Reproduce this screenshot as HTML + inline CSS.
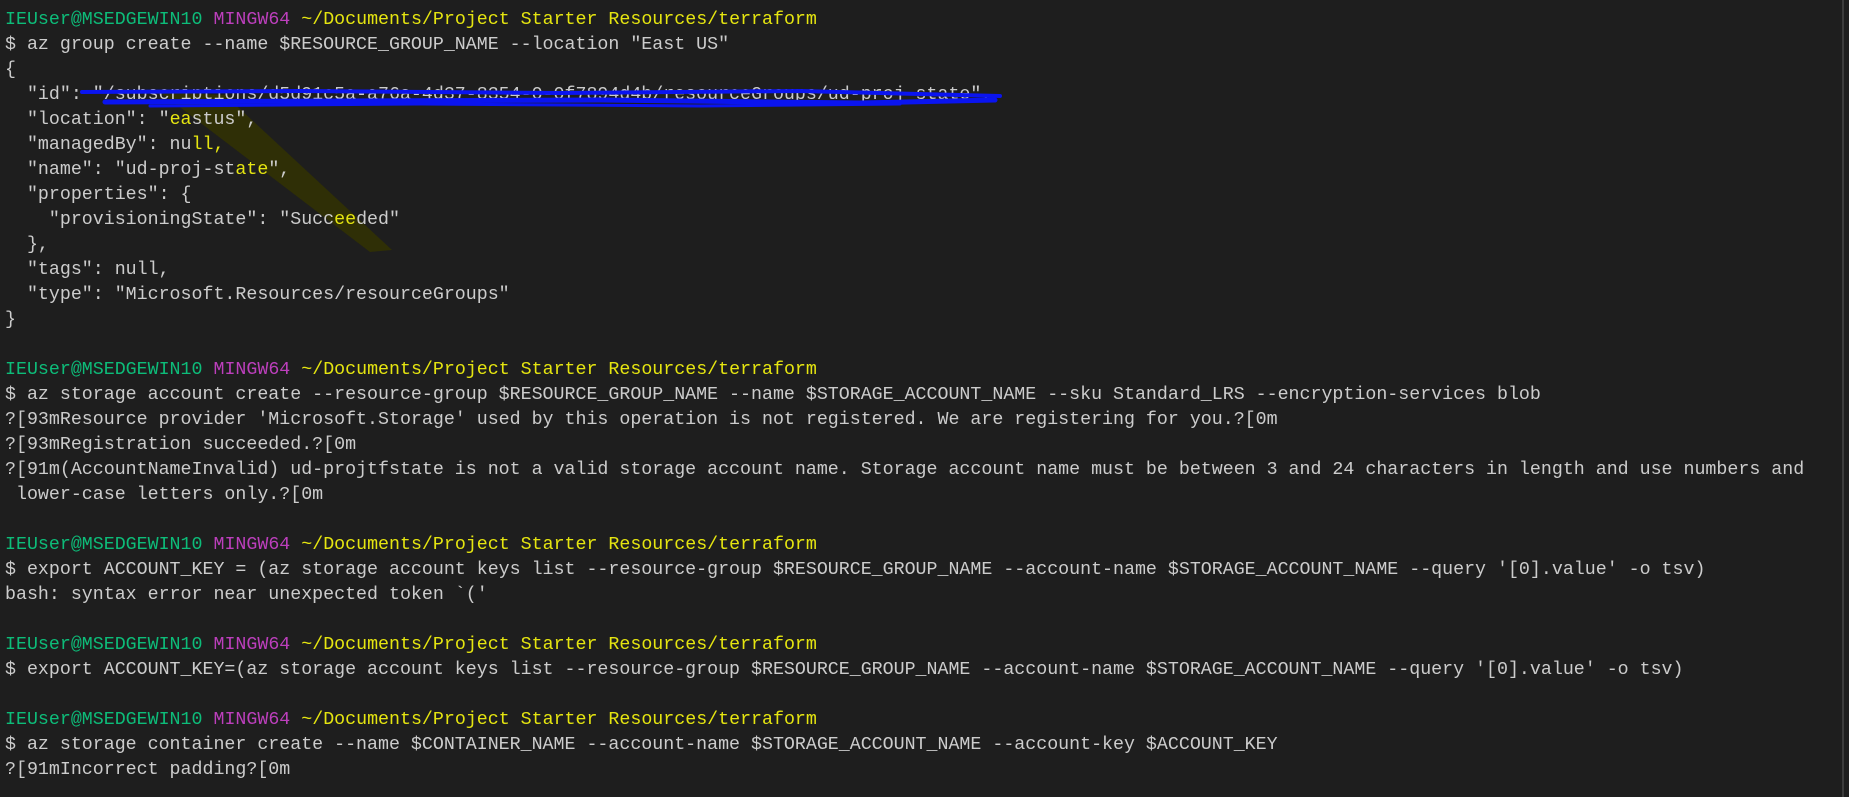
<!DOCTYPE html>
<html><head><meta charset="utf-8"><style>
html,body{margin:0;padding:0;}
body{width:1849px;height:797px;background:#1e1e1e;overflow:hidden;position:relative;}
pre{position:absolute;left:5px;top:8px;margin:0;font-family:"Liberation Mono","DejaVu Sans Mono",monospace;font-size:18.3px;line-height:25px;color:#cccccc;white-space:pre;z-index:2;}
.g{color:#0dbc79}.m{color:#bc3fbc}.y{color:#e5e510}
svg{position:absolute;left:0;top:0;z-index:1}
svg.top{z-index:3}
.bar{position:absolute;left:1842px;top:0;width:2px;height:797px;background:#3c3c3c}
</style></head><body>
<svg width="1849" height="797"><polygon points="160,92 225,95 392,250 370,252" fill="#2f2f06"/></svg>
<pre><span class="g">IEUser@MSEDGEWIN10</span> <span class="m">MINGW64</span> <span class="y">~/Documents/Project Starter Resources/terraform</span>
$ az group create --name $RESOURCE_GROUP_NAME --location "East US"
{
  "id": "/subscriptions/d5d91c5a-a76a-4d37-8354-0-0f7894d4b/resourceGroups/ud-proj-state",
  "location": "<span class="y">ea</span>stus",
  "managedBy": nu<span class="y">ll,</span>
  "name": "ud-proj-st<span class="y">ate</span>",
  "properties": {
    "provisioningState": "Succ<span class="y">ee</span>ded"
  },
  "tags": null,
  "type": "Microsoft.Resources/resourceGroups"
}

<span class="g">IEUser@MSEDGEWIN10</span> <span class="m">MINGW64</span> <span class="y">~/Documents/Project Starter Resources/terraform</span>
$ az storage account create --resource-group $RESOURCE_GROUP_NAME --name $STORAGE_ACCOUNT_NAME --sku Standard_LRS --encryption-services blob
?[93mResource provider 'Microsoft.Storage' used by this operation is not registered. We are registering for you.?[0m
?[93mRegistration succeeded.?[0m
?[91m(AccountNameInvalid) ud-projtfstate is not a valid storage account name. Storage account name must be between 3 and 24 characters in length and use numbers and
 lower-case letters only.?[0m

<span class="g">IEUser@MSEDGEWIN10</span> <span class="m">MINGW64</span> <span class="y">~/Documents/Project Starter Resources/terraform</span>
$ export ACCOUNT_KEY = (az storage account keys list --resource-group $RESOURCE_GROUP_NAME --account-name $STORAGE_ACCOUNT_NAME --query '[0].value' -o tsv)
bash: syntax error near unexpected token `('

<span class="g">IEUser@MSEDGEWIN10</span> <span class="m">MINGW64</span> <span class="y">~/Documents/Project Starter Resources/terraform</span>
$ export ACCOUNT_KEY=(az storage account keys list --resource-group $RESOURCE_GROUP_NAME --account-name $STORAGE_ACCOUNT_NAME --query '[0].value' -o tsv)

<span class="g">IEUser@MSEDGEWIN10</span> <span class="m">MINGW64</span> <span class="y">~/Documents/Project Starter Resources/terraform</span>
$ az storage container create --name $CONTAINER_NAME --account-name $STORAGE_ACCOUNT_NAME --account-key $ACCOUNT_KEY
?[91mIncorrect padding?[0m
</pre>
<svg class="top" width="1849" height="797">
<g fill="none" stroke="#0a14f0" stroke-linecap="round">
<path d="M82 92 L300 91 L560 93 L800 91 L1000 96" stroke-width="4"/>
<path d="M105 102 L340 101 L600 100 L860 103 L995 100" stroke-width="5"/>
<path d="M150 106 L420 104 L700 106 L900 104" stroke-width="3"/>
</g>
</svg>
<div class="bar"></div>
</body></html>
